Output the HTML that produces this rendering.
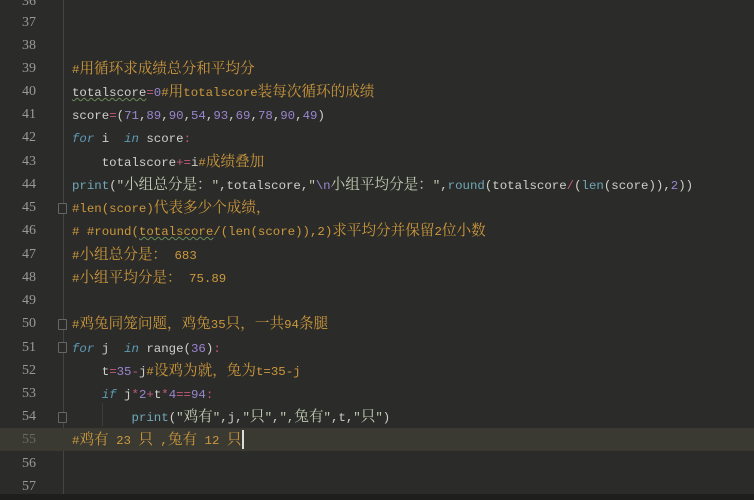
<!DOCTYPE html>
<html><head><meta charset="utf-8"><style>
body{margin:0;width:754px;height:500px;background:#2b2b29;overflow:hidden;font-family:"Liberation Mono","Noto Sans CJK SC",monospace;font-size:12.4px;color:#cfcfca;position:relative}
.ln{position:absolute;left:0;width:36px;text-align:right;color:#9a9a95;font-family:"Liberation Serif",serif;font-size:14px}
.l{position:absolute;left:72px;white-space:pre;line-height:23px;height:23px;margin-top:2px}
.row{position:absolute;left:0;width:754px;height:23px}
b{font-weight:normal;font-family:"Noto Serif CJK SC","Noto Sans CJK SC",sans-serif;font-size:14.6px;line-height:10px}
.c{color:#cc983c}.n{color:#9a86d0}.k{color:#5d9bb5;font-style:italic}.f{color:#6fa8b8}.o{color:#c25a7a}.s{color:#c2ccb4}
.u{text-decoration:underline wavy #6a8a5a;text-decoration-thickness:1px}
.fold{position:absolute;left:58px;width:9px;height:11px;border:1px solid #666;border-radius:1px;box-sizing:border-box;background:#2b2b29}
.g{position:absolute;width:1px;background:#3d3d3a}
</style></head><body>
<div style="position:absolute;left:63px;top:0;width:1px;height:500px;background:#444"></div>
<div class="row" style="top:428px;background:#3a3a33"></div>
<div style="position:absolute;left:0;top:494px;width:754px;height:6px;background:#1e1e1d"></div>
<div style="position:absolute;left:242px;top:430px;width:2px;height:19px;background:#ddd"></div>
<div class="g" style="left:102px;top:403px;height:23px"></div>
<div class="fold" style="top:203px"></div>
<div class="fold" style="top:319px"></div>
<div class="fold" style="top:342px"></div>
<div class="fold" style="top:412px"></div>

<div class="ln" style="top:-6px">36</div>
<div class="ln" style="top:15px">37</div>
<div class="ln" style="top:38px">38</div>
<div class="ln" style="top:61px">39</div>
<div class="ln" style="top:84px">40</div>
<div class="ln" style="top:107px">41</div>
<div class="ln" style="top:130px">42</div>
<div class="ln" style="top:154px">43</div>
<div class="ln" style="top:177px">44</div>
<div class="ln" style="top:200px">45</div>
<div class="ln" style="top:223px">46</div>
<div class="ln" style="top:247px">47</div>
<div class="ln" style="top:270px">48</div>
<div class="ln" style="top:293px">49</div>
<div class="ln" style="top:316px">50</div>
<div class="ln" style="top:340px">51</div>
<div class="ln" style="top:363px">52</div>
<div class="ln" style="top:386px">53</div>
<div class="ln" style="top:409px">54</div>
<div class="ln" style="top:432px;color:#6a6a66">55</div>
<div class="ln" style="top:456px">56</div>
<div class="ln" style="top:479px">57</div>

<div class="l c" style="top:57px">#<b>用循环求成绩总分和平均分</b></div>
<div class="l" style="top:80px"><span class="u">totalscore</span><span class="o">=</span><span class="n">0</span><span class="c">#<b>用</b>totalscore<b>装每次循环的成绩</b></span></div>
<div class="l" style="top:103px">score<span class="o">=</span>(<span class="n">71</span>,<span class="n">89</span>,<span class="n">90</span>,<span class="n">54</span>,<span class="n">93</span>,<span class="n">69</span>,<span class="n">78</span>,<span class="n">90</span>,<span class="n">49</span>)</div>
<div class="l" style="top:126px"><span class="k">for</span> i  <span class="k">in</span> score<span class="o">:</span></div>
<div class="l" style="top:150px">    totalscore<span class="o">+=</span>i<span class="c">#<b>成绩叠加</b></span></div>
<div class="l" style="top:173px"><span class="f">print</span>(<span class="s">"<b>小组总分是：</b>"</span>,totalscore,<span class="s">"<span class="n">\n</span><b>小组平均分是：</b>"</span>,<span class="f">round</span>(totalscore<span class="o">/</span>(<span class="f">len</span>(score)),<span class="n">2</span>))</div>
<div class="l c" style="top:196px">#len(score)<b>代表多少个成绩，</b></div>
<div class="l c" style="top:219px"># #round(<span class="u">totalscore</span>/(len(score)),2)<b>求平均分并保留</b>2<b>位小数</b></div>
<div class="l c" style="top:243px">#<b>小组总分是：</b> 683</div>
<div class="l c" style="top:266px">#<b>小组平均分是：</b> 75.89</div>
<div class="l c" style="top:312px">#<b>鸡兔同笼问题，鸡兔</b>35<b>只，一共</b>94<b>条腿</b></div>
<div class="l" style="top:336px"><span class="k">for</span> j  <span class="k">in</span> range(<span class="n">36</span>)<span class="o">:</span></div>
<div class="l" style="top:359px">    t<span class="o">=</span><span class="n">35</span><span class="o">-</span>j<span class="c">#<b>设鸡为就，兔为</b>t=35-j</span></div>
<div class="l" style="top:382px">    <span class="k">if</span> j<span class="o">*</span><span class="n">2</span><span class="o">+</span>t<span class="o">*</span><span class="n">4</span><span class="o">==</span><span class="n">94</span><span class="o">:</span></div>
<div class="l" style="top:405px">        <span class="f">print</span>(<span class="s">"<b>鸡有</b>"</span>,j,<span class="s">"<b>只</b>"</span>,<span class="s">",<b>兔有</b>"</span>,t,<span class="s">"<b>只</b>"</span>)</div>
<div class="l c" style="top:428px">#<b>鸡有</b> 23 <b>只</b> ,<b>兔有</b> 12 <b>只</b></div>
</body></html>
